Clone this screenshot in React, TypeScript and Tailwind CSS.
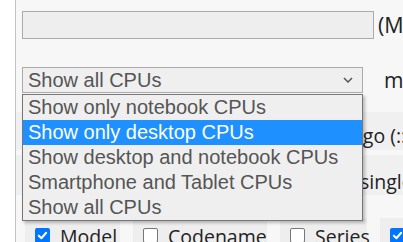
import React from 'react';

const options = [
  'Show only notebook CPUs',
  'Show only desktop CPUs',
  'Show desktop and notebook CPUs',
  'Smartphone and Tablet CPUs',
  'Show all CPUs',
];

const Check: React.FC<{ checked?: boolean }> = ({ checked }) =>
  checked ? (
    <span className="flex h-[15px] w-[15px] shrink-0 items-center justify-center rounded-[2px] bg-[#0075ff]">
      <svg width="11" height="11" viewBox="0 0 12 12" fill="none">
        <path d="M2 6.2 4.8 9 10 3" stroke="white" strokeWidth="2.2" strokeLinecap="round" strokeLinejoin="round" />
      </svg>
    </span>
  ) : (
    <span className="h-[15px] w-[15px] shrink-0 rounded-[2px] border border-[#767676] bg-white" />
  );

const App: React.FC = () => {
  const selected = 1;

  return (
    <div className="flex h-[242px] w-[403px] overflow-hidden bg-white">
      <div className="w-[15px] shrink-0 bg-white" />
      <div className="relative flex-1 overflow-hidden border-l border-[#c4c4c4] bg-[#f7f7f7] pt-[11px] font-['Open_Sans',sans-serif] text-[19.5px] leading-[22px] text-[#222]">
        {/* search input */}
        <div className="flex h-[28px] items-center pl-[6px]">
          <div className="h-[28px] w-[352px] shrink-0 border border-[#aaa] bg-[#eee]" />
          <span className="ml-[4px] whitespace-nowrap text-[21.5px]">(Max</span>
        </div>

        {/* select */}
        <div className="mt-[28px] flex h-[26px] items-center pl-[6px]">
          <div className="flex h-[26px] w-[341px] shrink-0 items-center justify-between border border-[#aaa] bg-[#efefef] pl-[5px] pr-[9px] font-['Liberation_Sans',Arial,sans-serif] text-[20px] text-[#555]">
            <span className="leading-none">Show all CPUs</span>
            <svg width="10" height="6" viewBox="0 0 10 6" fill="none">
              <path d="M1 1l4 4 4-4" stroke="#555" strokeWidth="1.5" />
            </svg>
          </div>
          <span className="ml-[21px] whitespace-nowrap text-[21px]">min</span>
        </div>

        {/* rows behind the list */}
        <div className="mt-[19px] flex flex-col gap-[5px]">
          <div className="flex h-[38px] items-end bg-[#f0f0f0] pb-[3px] pl-[336px]">
            <span className="whitespace-nowrap">ago (::</span>
          </div>
          <div className="flex h-[40px] items-end bg-[#f0f0f0] pb-[2px] pl-[344px]">
            <span className="whitespace-nowrap">single</span>
          </div>
        </div>

        {/* column toggles */}
        <div className="mt-[23px] flex gap-[13px] pl-[9px]">
          {[
            { label: 'Model', checked: true, w: 'w-[95px]' },
            { label: 'Codename', checked: false, w: 'w-[134px]' },
            { label: 'Series', checked: false, w: 'w-[87px]' },
            { label: 'Cores', checked: true, w: 'w-[80px]' },
          ].map((c) => (
            <div key={c.label} className={`flex h-[34px] shrink-0 items-start gap-[10px] bg-[#eeeeee] pl-[10px] pt-[10px] ${c.w}`}>
              <Check checked={c.checked} />
              <span className="-mt-[2px] whitespace-nowrap">{c.label}</span>
            </div>
          ))}
        </div>

        {/* open option list */}
        <div className="absolute left-[6px] top-[94px] w-[341px] border border-[#777] bg-[#efefef] font-['Liberation_Sans',Arial,sans-serif] text-[20px] shadow-[2px_2px_3px_rgba(0,0,0,0.25)]">
          {options.map((o, i) => (
            <div
              key={o}
              className={`flex h-[25px] items-center pb-[2px] pl-[5px] leading-none ${
                i === selected ? 'bg-[#1e90ff] text-white' : 'text-[#555]'
              }`}
            >
              {o}
            </div>
          ))}
        </div>
      </div>
    </div>
  );
};

export default App;
